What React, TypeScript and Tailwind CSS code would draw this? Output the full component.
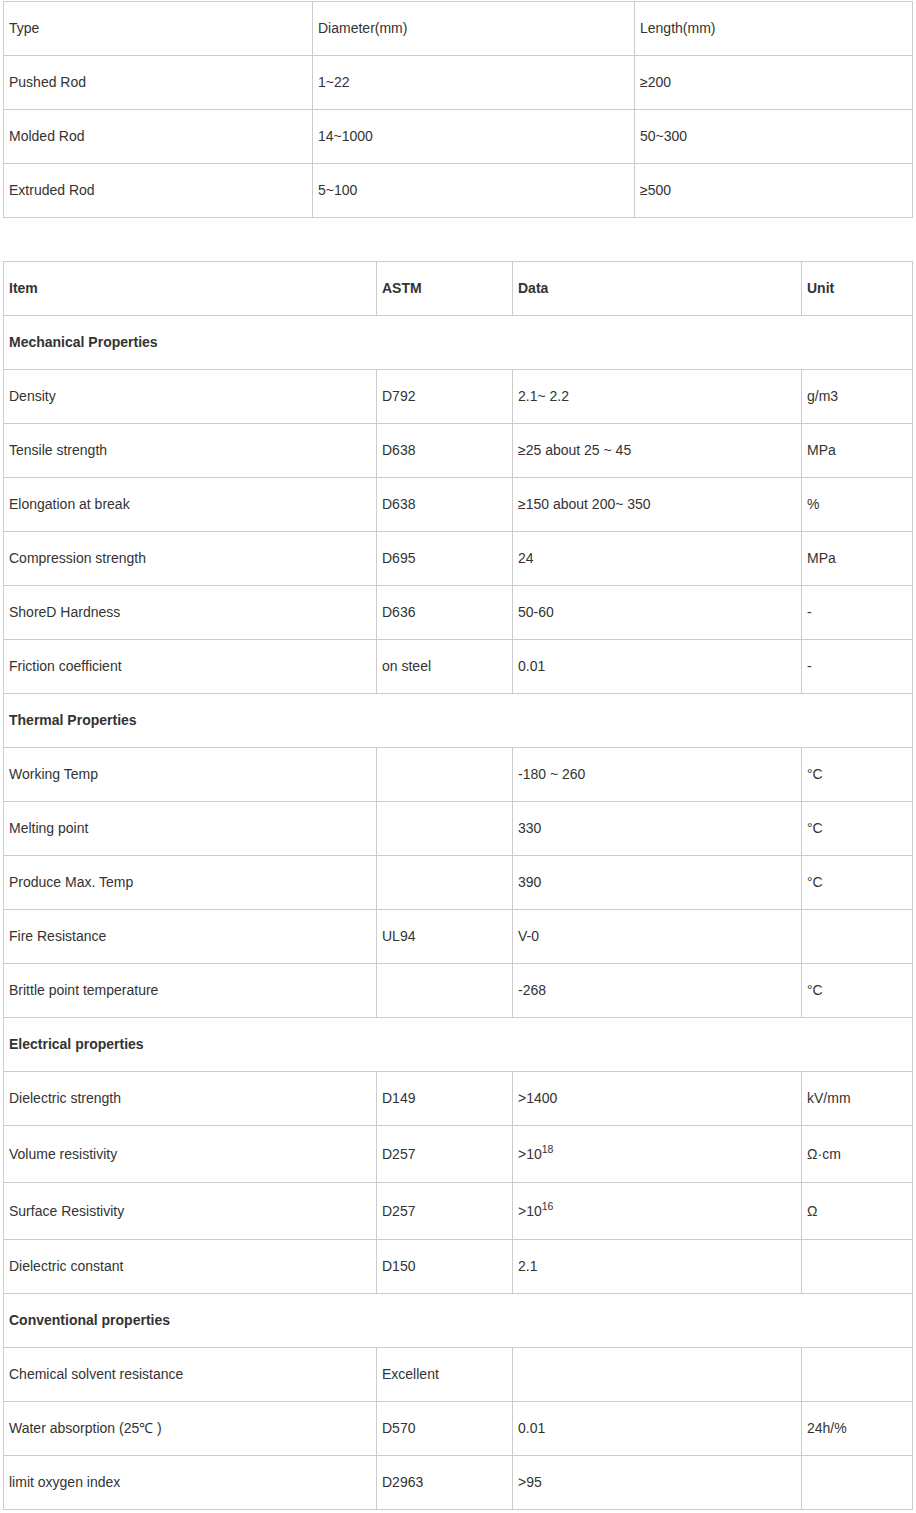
import React from "react";

type Row =
  | { kind: "section"; label: string }
  | { kind: "data"; cells: React.ReactNode[]; tall?: boolean };

const t1: string[][] = [
  ["Pushed Rod", "1~22", "≥200"],
  ["Molded Rod", "14~1000", "50~300"],
  ["Extruded Rod", "5~100", "≥500"],
];

const t2: Row[] = [
  { kind: "section", label: "Mechanical Properties" },
  { kind: "data", cells: ["Density", "D792", "2.1~ 2.2", "g/m3"] },
  { kind: "data", cells: ["Tensile strength", "D638", "≥25 about 25 ~ 45", "MPa"] },
  { kind: "data", cells: ["Elongation at break", "D638", "≥150 about 200~ 350", "%"] },
  { kind: "data", cells: ["Compression strength", "D695", "24", "MPa"] },
  { kind: "data", cells: ["ShoreD Hardness", "D636", "50-60", "-"] },
  { kind: "data", cells: ["Friction coefficient", "on steel", "0.01", "-"] },
  { kind: "section", label: "Thermal Properties" },
  { kind: "data", cells: ["Working Temp", "", "-180 ~ 260", "°C"] },
  { kind: "data", cells: ["Melting point", "", "330", "°C"] },
  { kind: "data", cells: ["Produce Max. Temp", "", "390", "°C"] },
  { kind: "data", cells: ["Fire Resistance", "UL94", "V-0", ""] },
  { kind: "data", cells: ["Brittle point temperature", "", "-268", "°C"] },
  { kind: "section", label: "Electrical properties" },
  { kind: "data", cells: ["Dielectric strength", "D149", ">1400", "kV/mm"] },
  {
    kind: "data",
    tall: true,
    cells: [
      "Volume resistivity",
      "D257",
      <span key="v">
        &gt;10<sup>18</sup>
      </span>,
      "Ω·cm",
    ],
  },
  {
    kind: "data",
    tall: true,
    cells: [
      "Surface Resistivity",
      "D257",
      <span key="s">
        &gt;10<sup>16</sup>
      </span>,
      "Ω",
    ],
  },
  { kind: "data", cells: ["Dielectric constant", "D150", "2.1", ""] },
  { kind: "section", label: "Conventional properties" },
  { kind: "data", cells: ["Chemical solvent resistance", "Excellent", "", ""] },
  { kind: "data", cells: ["Water absorption (25℃ )", "D570", "0.01", "24h/%"] },
  { kind: "data", cells: ["limit oxygen index", "D2963", ">95", ""] },
];

const td = "border border-[#cccccc] px-[5px] py-0 align-middle text-left";

export default function App() {
  return (
    <div
      className="bg-white min-h-[1513px] pl-[3px] pt-[1px] text-[14px] text-[#333333]"
      style={{ fontFamily: '"Liberation Sans", Arial, sans-serif' }}
    >
      <table className="border-collapse table-fixed w-[909px]">
        <colgroup>
          <col className="w-[309px]" />
          <col className="w-[322px]" />
          <col className="w-[278px]" />
        </colgroup>
        <tbody>
          <tr className="h-[54px]">
            <td className={td}>Type</td>
            <td className={td}>Diameter(mm)</td>
            <td className={td}>Length(mm)</td>
          </tr>
          {t1.map((r, i) => (
            <tr key={i} className="h-[54px]">
              {r.map((c, j) => (
                <td key={j} className={td}>
                  {c}
                </td>
              ))}
            </tr>
          ))}
        </tbody>
      </table>

      <div className="h-[43px]" />

      <table className="border-collapse table-fixed w-[909px]">
        <colgroup>
          <col className="w-[373px]" />
          <col className="w-[136px]" />
          <col className="w-[289px]" />
          <col className="w-[111px]" />
        </colgroup>
        <tbody>
          <tr className="h-[54px] font-bold">
            <td className={td}>Item</td>
            <td className={td}>ASTM</td>
            <td className={td}>Data</td>
            <td className={td}>Unit</td>
          </tr>
          {t2.map((r, i) =>
            r.kind === "section" ? (
              <tr key={i} className="h-[54px]">
                <td colSpan={4} className={`${td} font-bold`}>
                  {r.label}
                </td>
              </tr>
            ) : (
              <tr key={i} className={r.tall ? "h-[57px]" : "h-[54px]"}>
                {r.cells.map((c, j) => (
                  <td key={j} className={td}>
                    {c}
                  </td>
                ))}
              </tr>
            )
          )}
        </tbody>
      </table>
    </div>
  );
}
